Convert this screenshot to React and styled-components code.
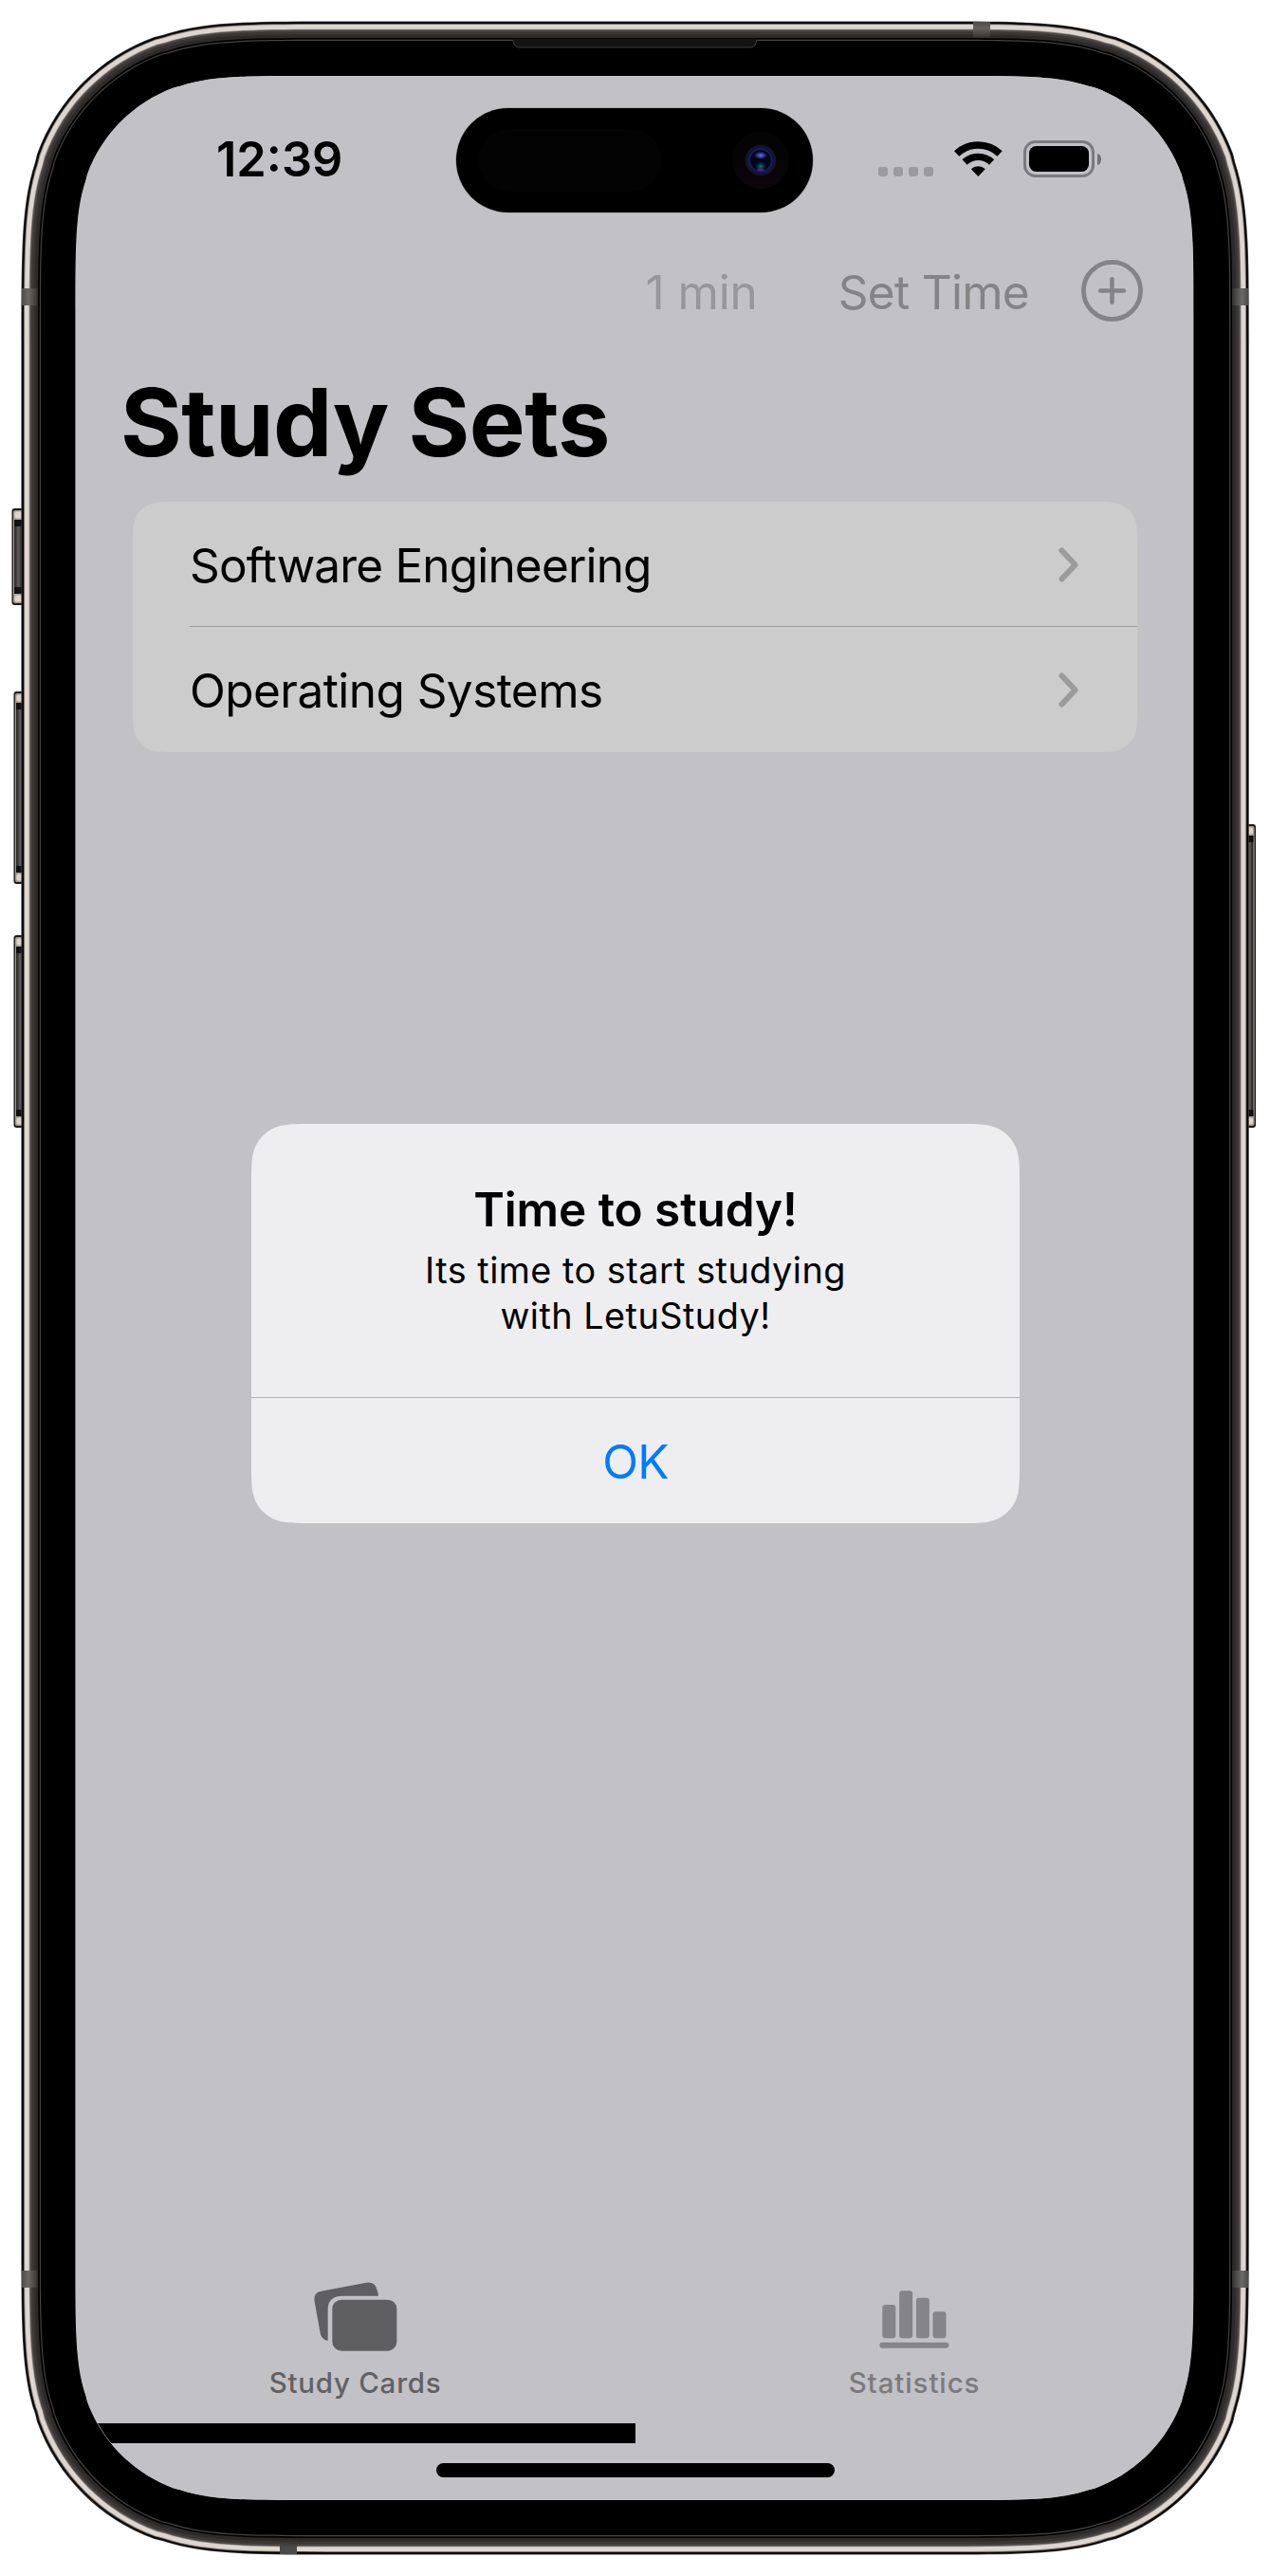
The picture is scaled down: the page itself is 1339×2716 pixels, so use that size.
import React from "react";
import styled, { createGlobalStyle } from "styled-components";

/* Rounded rectangle with continuous-curvature corners. */
function squircle(x, y, w, h, r) {
  const a = 1.528665 * r;
  const b = 1.08849323 * r;
  const c = 0.86840689 * r;
  const d = 0.66993427 * r;
  const e = 0.065496 * r;
  const f = 0.63149399 * r;
  const g = 0.074911 * r;
  const i = 0.37282392 * r;
  const j = 0.16905899 * r;
  const R = x + w;
  const B = y + h;
  return [
    `M${x + a} ${y}L${R - a} ${y}`,
    `C${R - b} ${y} ${R - c} ${y} ${R - d} ${y + e}L${R - f} ${y + g}`,
    `C${R - i} ${y + j} ${R - j} ${y + i} ${R - g} ${y + f}L${R - e} ${y + d}`,
    `C${R} ${y + c} ${R} ${y + b} ${R} ${y + a}L${R} ${B - a}`,
    `C${R} ${B - b} ${R} ${B - c} ${R - e} ${B - d}L${R - g} ${B - f}`,
    `C${R - j} ${B - i} ${R - i} ${B - j} ${R - f} ${B - g}L${R - d} ${B - e}`,
    `C${R - c} ${B} ${R - b} ${B} ${R - a} ${B}L${x + a} ${B}`,
    `C${x + b} ${B} ${x + c} ${B} ${x + d} ${B - e}L${x + f} ${B - g}`,
    `C${x + i} ${B - j} ${x + j} ${B - i} ${x + g} ${B - f}L${x + e} ${B - d}`,
    `C${x} ${B - c} ${x} ${B - b} ${x} ${B - a}L${x} ${y + a}`,
    `C${x} ${y + b} ${x} ${y + c} ${x + e} ${y + d}L${x + g} ${y + f}`,
    `C${x + j} ${y + i} ${x + i} ${y + j} ${x + f} ${y + g}L${x + d} ${y + e}`,
    `C${x + c} ${y} ${x + b} ${y} ${x + a} ${y}Z`,
  ].join("");
}

const GlobalStyle = createGlobalStyle`
  * { box-sizing: border-box; }
  body {
    margin: 0;
    background: #fff;
    font-family: Inter, "Liberation Sans", sans-serif;
    color: #000;
  }
  h1, h2, p { margin: 0; }
  button { border: 0; padding: 0; background: none; font-family: inherit; }
  svg { display: block; flex: none; }
`;

const Phone = styled.div`
  position: relative;
  width: 1339px;
  height: 2716px;
  padding: 80px 81px 80px 80px;
`;

const Chassis = styled.svg`
  position: absolute;
  inset: 0;
`;

const Screen = styled.main`
  position: relative;
  display: flex;
  flex-direction: column;
  width: 1178px;
  height: 2556px;
  background: #c2c1c6;
  clip-path: path("${squircle(0, 0, 1178, 2556, 165)}");
`;

const StatusBar = styled.header`
  display: grid;
  grid-template-columns: 401px 376px 401px;
  align-items: center;
  height: 175px;
`;

const Clock = styled.div`
  padding-left: 148px;
  font-size: 50.5px;
  line-height: 60px;
  font-weight: 600;
`;

const Island = styled.div`
  display: flex;
  align-items: center;
  justify-content: space-between;
  height: 110px;
  margin-top: 3px;
  padding: 0 25px 0 23px;
  border-radius: 55px;
  background: #000;
  box-shadow: 0 0 0 0.6px rgba(120, 118, 124, 0.55);
`;

const Sensor = styled.div`
  width: 194px;
  height: 66px;
  border-radius: 33px;
  background: #030303;
`;

const StatusIcons = styled.div`
  display: flex;
  align-items: center;
  padding-left: 69px;
`;

const SignalDots = styled.div`
  display: flex;
  gap: 6px;
  margin: 27px 22px 0 0;
`;

const Dot = styled.span`
  width: 10px;
  height: 10px;
  border-radius: 3px;
  background: #9b9b9d;
`;

const Battery = styled.div`
  display: flex;
  align-items: center;
  margin-left: 22px;
`;

const BatteryShell = styled.div`
  width: 75px;
  height: 39px;
  padding: 3px;
  border: 3px solid #7b7b7e;
  border-radius: 12.5px;
`;

const BatteryCharge = styled.div`
  height: 27px;
  border-radius: 7.5px;
  background: #000;
`;

const BatteryTip = styled.div`
  width: 4px;
  height: 12px;
  margin-left: 3px;
  border-radius: 0 4px 4px 0 / 0 6px 6px 0;
  background: #727275;
`;

const NavBar = styled.nav`
  display: flex;
  align-items: center;
  justify-content: flex-end;
  height: 103px;
  padding-right: 53px;
`;

const NavText = styled.span`
  font-size: 49.5px;
  line-height: 60px;
  padding-top: 2px;
  letter-spacing: ${(p) => p.$tracking}px;
  color: ${(p) => p.$color};
  margin-right: ${(p) => p.$gap}px;
`;

const Title = styled.h1`
  margin-top: 27px;
  padding-left: 47px;
  font-size: 99px;
  line-height: 120px;
  font-weight: 700;
  letter-spacing: -0.6px;
  word-spacing: -2px;
`;

const List = styled.section`
  width: 1059px;
  margin: 24px 0 0 60px;
  padding-left: 60px;
  background: #cccccc;
  clip-path: path("${squircle(0, 0, 1059, 264, 30)}");
`;

const Row = styled.div`
  display: flex;
  align-items: center;
  justify-content: space-between;
  height: 132px;
  padding: 1px 61px 0 0;
  border-bottom: 1px solid ${(p) => (p.$last ? "transparent" : "#9c9c9e")};
`;

const RowLabel = styled.span`
  padding-top: 2px;
  font-size: 49.5px;
  line-height: 60px;
  letter-spacing: ${(p) => p.$tracking}px;
`;

const Spacer = styled.div`
  flex: 1;
`;

const TabBar = styled.footer`
  display: grid;
  grid-template-columns: 589px 589px;
`;

const Tab = styled.div`
  display: flex;
  flex-direction: column;
  align-items: center;
  gap: 15px;
  padding: 0 0 26px ${(p) => p.$shift || 0}px;
  font-size: 29.5px;
  line-height: 34px;
  font-weight: 500;
  letter-spacing: ${(p) => p.$tracking}px;
  color: ${(p) => p.$color};
`;

const ProgressBar = styled.div`
  width: 590px;
  height: 21px;
  background: #000;
`;

const HomeIndicator = styled.div`
  align-self: center;
  width: 420px;
  height: 15px;
  margin: 21px 0 24px 2px;
  border-radius: 7.5px;
  background: #000;
`;

const Alert = styled.div`
  position: absolute;
  left: 185px;
  top: 1105px;
  display: flex;
  flex-direction: column;
  width: 810px;
  height: 421px;
  background: #eeeef0;
  text-align: center;
  clip-path: path("${squircle(0, 0, 810, 421, 42)}");
`;

const AlertBody = styled.div`
  height: 289px;
  padding-top: 60px;
  border-bottom: 1px solid #b0b0b3;
`;

const AlertTitle = styled.h2`
  font-size: 49.5px;
  line-height: 60px;
  font-weight: 600;
  letter-spacing: -0.08px;
`;

const AlertMessage = styled.p`
  width: 500px;
  margin: 10px auto 0;
  font-size: 37.8px;
  line-height: 48px;
  letter-spacing: 0.48px;
`;

const AlertButton = styled.button`
  height: 132px;
  padding-top: 2px;
  font-size: 49.5px;
  line-height: 60px;
  letter-spacing: -0.85px;
  color: #007aff;
`;

/* [inset from the outer edge, colour] from the outside in */
const rings = [
  [0, "#3c3a39"],
  [0.8, "#050505"],
  [2.6, "#7d736c"],
  [3.6, "#ddd5cf"],
  [8.3, "#8f867f"],
  [9.1, "#4d4846"],
  [11, "#3a3635"],
  [14, "#2e2a29"],
  [17.6, "#000"],
  [19.4, "#434343"],
  [20.6, "#000"],
];

const sideKeys = [
  { x: 12.5, y: 536, h: 102, side: "left" },
  { x: 14.5, y: 729, h: 203, side: "left" },
  { x: 14.5, y: 986, h: 203, side: "left" },
  { x: 1324, y: 869, h: 320, side: "right" },
];

const bands = [
  { x: 23, y: 304, w: 17, h: 18, fill: "url(#bandLeft)" },
  { x: 23, y: 2394, w: 17, h: 18, fill: "url(#bandLeft)" },
  { x: 1299, y: 304, w: 17, h: 18, fill: "url(#bandRight)" },
  { x: 1299, y: 2394, w: 17, h: 18, fill: "url(#bandRight)" },
  { x: 1026, y: 23, w: 18, h: 17, fill: "url(#bandTop)" },
  { x: 295, y: 2676, w: 18, h: 17, fill: "url(#bandBottom)" },
];

function SideKey({ x, y, h, side }) {
  const flip = side === "right" ? -1 : 1;
  return (
    <g transform={`translate(${x} ${y}) scale(${flip} 1)`}>
      <rect width="14" height={h} rx="3" fill="#1b1a1a" />
      <rect x="1.4" y="2" width="12" height={h - 4} rx="2" fill="#a89c92" />
      <rect x="3" y="3.5" width="8" height="7" rx="2" fill="#ddd5cf" />
      <rect x="3" y={h - 10.5} width="8" height="7" rx="2" fill="#ddd5cf" />
      <rect x="2.6" y="12" width="8" height={h - 24} fill="url(#keyFace)" />
      <rect x="2.6" y="12" width="8" height="7" fill="#080808" opacity="0.85" />
      <rect x="2.6" y={h - 19} width="8" height="7" fill="#080808" opacity="0.85" />
    </g>
  );
}

function DeviceChassis() {
  return (
    <Chassis width="1339" height="2716" viewBox="0 0 1339 2716">
      <defs>
        <linearGradient id="keyFace">
          <stop offset="0" stopColor="#1c1a1a" />
          <stop offset="0.5" stopColor="#625e5c" />
          <stop offset="1" stopColor="#2a2827" />
        </linearGradient>
        <linearGradient id="bandLeft">
          <stop offset="0" stopColor="#4c4b4a" />
          <stop offset="0.4" stopColor="#6b6a68" />
          <stop offset="1" stopColor="#333130" />
        </linearGradient>
        <linearGradient id="bandRight">
          <stop offset="0" stopColor="#333130" />
          <stop offset="0.6" stopColor="#6b6a68" />
          <stop offset="1" stopColor="#4c4b4a" />
        </linearGradient>
        <linearGradient id="bandTop" x2="0" y2="1">
          <stop offset="0" stopColor="#4c4b4a" />
          <stop offset="0.4" stopColor="#646260" />
          <stop offset="1" stopColor="#333130" />
        </linearGradient>
        <linearGradient id="bandBottom" x2="0" y2="1">
          <stop offset="0" stopColor="#2a2827" />
          <stop offset="0.6" stopColor="#4c4b4a" />
          <stop offset="1" stopColor="#4c4b4a" />
        </linearGradient>
      </defs>
      {sideKeys.map((k) => (
        <SideKey key={`${k.side}${k.y}`} {...k} />
      ))}
      {rings.map(([inset, fill]) => (
        <path
          key={inset}
          fill={fill}
          d={squircle(
            22.4 + inset,
            22.4 + inset,
            1294.4 - inset * 2,
            2671.2 - inset * 2,
            222 - inset
          )}
        />
      ))}
      {bands.map((b) => (
        <rect key={`${b.x}-${b.y}`} x={b.x} y={b.y} width={b.w} height={b.h} fill={b.fill} />
      ))}
      <path
        d="M540.5 40.5h257.5v2q-1 7.5-7 7.5H547.5q-6 0-7-7.5z"
        fill="#131313"
      />
      <path
        d="M540.5 42q1.5 8 7 8H791q5.5 0 7-8"
        fill="none"
        stroke="#3a3a3a"
        strokeWidth="1.2"
      />
      <path d={squircle(79.4, 80, 1179, 2556, 165)} fill="#c2c1c6" />
    </Chassis>
  );
}

function Camera() {
  return (
    <svg width="60" height="60" viewBox="0 0 60 60">
      <defs>
        <linearGradient id="camGlow" x2="0" y2="1">
          <stop offset="0.4" stopColor="#040404" />
          <stop offset="1" stopColor="#0d040c" />
        </linearGradient>
        <radialGradient id="camTop">
          <stop offset="0" stopColor="#6b74d8" />
          <stop offset="0.5" stopColor="#30358c" />
          <stop offset="1" stopColor="#161a4c" stopOpacity="0" />
        </radialGradient>
        <radialGradient id="camLow">
          <stop offset="0" stopColor="#127a80" />
          <stop offset="1" stopColor="#0b2f52" stopOpacity="0" />
        </radialGradient>
      </defs>
      <circle cx="30" cy="30" r="30" fill="url(#camGlow)" />
      <circle cx="30" cy="30" r="16.3" fill="#14152b" />
      <circle cx="30" cy="30" r="11.8" fill="#04051a" stroke="#151a66" strokeWidth="2" />
      <ellipse cx="30" cy="24.8" rx="7.5" ry="4.5" fill="url(#camTop)" />
      <ellipse cx="30" cy="36.5" rx="6.5" ry="5.5" fill="url(#camLow)" />
      <ellipse cx="30" cy="40" rx="3.5" ry="1.5" fill="#5a2696" opacity="0.8" />
    </svg>
  );
}

function WifiIcon() {
  return (
    <svg width="51" height="39" viewBox="351 444 153 117">
      <g fill="none" stroke="#000">
        <path d="M358.9 486.2A99 99 0 0 1 495.1 486.2" strokeWidth="23" />
        <path d="M384.3 513A62 62 0 0 1 469.7 513" strokeWidth="22" />
      </g>
      <path d="M427 558L404.5 534.5A33.5 33.5 0 0 1 449.5 534.5Z" />
    </svg>
  );
}

function PlusCircleIcon() {
  return (
    <svg width="65" height="65" viewBox="0 0 65 65" fill="none" stroke="#848486" strokeLinecap="round">
      <circle cx="32.5" cy="32.5" r="30.1" strokeWidth="4.8" />
      <path d="M32.5 20.2v24.6M20.2 32.5h24.6" strokeWidth="4.6" />
    </svg>
  );
}

function Chevron() {
  return (
    <svg width="22" height="37" viewBox="0 0 22 37">
      <path
        d="M3.5 3.5L17.6 18.5L3.5 33.5"
        fill="none"
        stroke="#9b9b9c"
        strokeWidth="6"
        strokeLinecap="round"
        strokeLinejoin="round"
      />
    </svg>
  );
}

function CardsIcon() {
  return (
    <svg width="88" height="74" viewBox="992 196 264 222" fill="#5f5f61">
      <rect x="1050" y="252" width="204" height="162" rx="29" />
      <path d="M1196 240H1081Q1036 241 1036 283V382Q1016 378 1012 358L993.5 255Q991 229 1014 225L1158 198.5Q1182 194 1190 216Q1195 228 1196 240Z" />
    </svg>
  );
}

function StatsIcon() {
  return (
    <svg width="74" height="74" viewBox="266 196 222 222" fill="#858489">
      <rect x="276" y="268" width="42" height="106" rx="9" />
      <rect x="329.5" y="224" width="42" height="150" rx="9" />
      <rect x="382.5" y="246" width="42" height="128" rx="9" />
      <rect x="435.5" y="290" width="42" height="84" rx="9" />
      <rect x="267" y="387" width="219" height="18" rx="9" />
    </svg>
  );
}

const studySets = [
  { name: "Software Engineering", tracking: -0.83 },
  { name: "Operating Systems", tracking: -0.55 },
];

export default function App() {
  return (
    <>
      <GlobalStyle />
      <Phone>
        <DeviceChassis />
        <Screen>
          <StatusBar>
            <Clock>12:39</Clock>
            <Island>
              <Sensor />
              <Camera />
            </Island>
            <StatusIcons>
              <SignalDots>
                <Dot />
                <Dot />
                <Dot />
                <Dot />
              </SignalDots>
              <WifiIcon />
              <Battery>
                <BatteryShell>
                  <BatteryCharge />
                </BatteryShell>
                <BatteryTip />
              </Battery>
            </StatusIcons>
          </StatusBar>
          <NavBar>
            <NavText $color="#97969b" $tracking={-0.1} $gap={85}>
              1 min
            </NavText>
            <NavText $color="#848486" $tracking={-0.7} $gap={55}>
              Set Time
            </NavText>
            <PlusCircleIcon />
          </NavBar>
          <Title>Study Sets</Title>
          <List>
            {studySets.map((set, i) => (
              <Row key={set.name} $last={i === studySets.length - 1}>
                <RowLabel $tracking={set.tracking}>{set.name}</RowLabel>
                <Chevron />
              </Row>
            ))}
          </List>
          <Spacer />
          <TabBar>
            <Tab $color="#616163" $tracking={0.75}>
              <CardsIcon />
              Study Cards
            </Tab>
            <Tab $color="#7b7a7f" $tracking={0.9} $shift={1}>
              <StatsIcon />
              Statistics
            </Tab>
          </TabBar>
          <ProgressBar />
          <HomeIndicator />
          <Alert role="alertdialog">
            <AlertBody>
              <AlertTitle>Time to study!</AlertTitle>
              <AlertMessage>
                Its time to start studying
                <br />
                with LetuStudy!
              </AlertMessage>
            </AlertBody>
            <AlertButton>OK</AlertButton>
          </Alert>
        </Screen>
      </Phone>
    </>
  );
}
